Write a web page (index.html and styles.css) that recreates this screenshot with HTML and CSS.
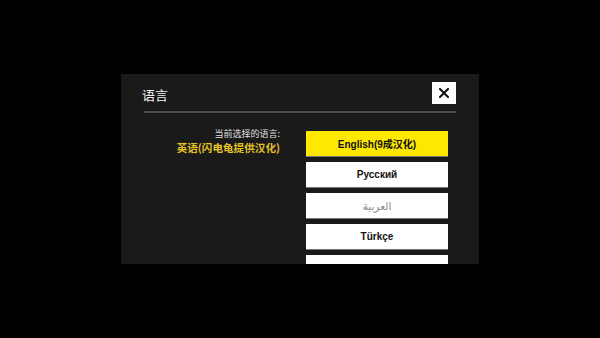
FILE: index.html
```html
<!DOCTYPE html>
<html>
<head>
<meta charset="utf-8">
<link rel="stylesheet" href="styles.css">
</head>
<body>
<div class="dialog">
  <div class="header">
    <span class="title">语言</span>
    <button class="close" aria-label="关闭">
      <svg width="10" height="10" viewBox="0 0 10 10"><path d="M1 1L9 9M9 1L1 9" stroke="#111" stroke-width="2" stroke-linecap="square"/></svg>
    </button>
  </div>
  <div class="body">
    <div class="current">
      <div class="label">当前选择的语言:</div>
      <div class="value">英语(闪电龟提供汉化)</div>
    </div>
    <div class="list">
      <div class="item active">English(9成汉化)</div>
      <div class="item">Русский</div>
      <div class="item arabic">العربية</div>
      <div class="item">Türkçe</div>
      <div class="item"></div>
    </div>
  </div>
</div>
</body>
</html>
```
FILE: styles.css
```css
html, body {
  margin: 0;
  padding: 0;
  background: #000;
  width: 600px;
  height: 338px;
  overflow: hidden;
  font-family: "Liberation Sans", "Noto Sans CJK SC", sans-serif;
}
.dialog {
  margin: 74px 0 0 121px;
  width: 358px;
  height: 190px;
  background: #1a1a1a;
  overflow: hidden;
  box-sizing: border-box;
  padding: 0 23px 0 23px;
}
.header {
  display: flex;
  align-items: center;
  justify-content: space-between;
  height: 39px;
  padding-top: 3px;
  border-bottom: 2px solid #4a4a4a;
  box-sizing: border-box;
}
.title {
  color: #f0f0f0;
  font-size: 13px;
  margin-left: -2px;
  margin-top: 0;
  font-family: "Noto Sans CJK SC", sans-serif;
}
.close {
  width: 24px;
  height: 22px;
  background: #fff;
  border: none;
  padding: 0;
  display: flex;
  align-items: center;
  justify-content: center;
  margin-bottom: 2px;
}
.body {
  display: flex;
  padding-top: 18px;
}
.current {
  width: 136px;
  text-align: right;
  font-family: "Noto Sans CJK SC", sans-serif;
}
.label {
  color: #e0e0e0;
  font-size: 9px;
  line-height: 13px;
  margin-top: -4px;
}
.value {
  color: #e2c226;
  font-size: 10.6px;
  font-weight: bold;
  line-height: 15px;
}
.list {
  margin-left: 26px;
  width: 142px;
  display: flex;
  flex-direction: column;
  gap: 5.5px;
}
.item {
  height: 25.5px;
  background: #fff;
  color: #111;
  font-weight: bold;
  font-size: 10px;
  display: flex;
  align-items: center;
  justify-content: center;
  border-bottom: 1px solid #777;
  box-sizing: border-box;
  flex-shrink: 0;
  padding-top: 1px;
  font-family: "Liberation Sans", "Noto Sans CJK SC", sans-serif;
}
.item.active {
  background: #ffe800;
}
.item.arabic {
  color: #8a8a8a;
  font-weight: normal;
  font-size: 10.5px;
  font-family: "DejaVu Sans", sans-serif;
}
```
